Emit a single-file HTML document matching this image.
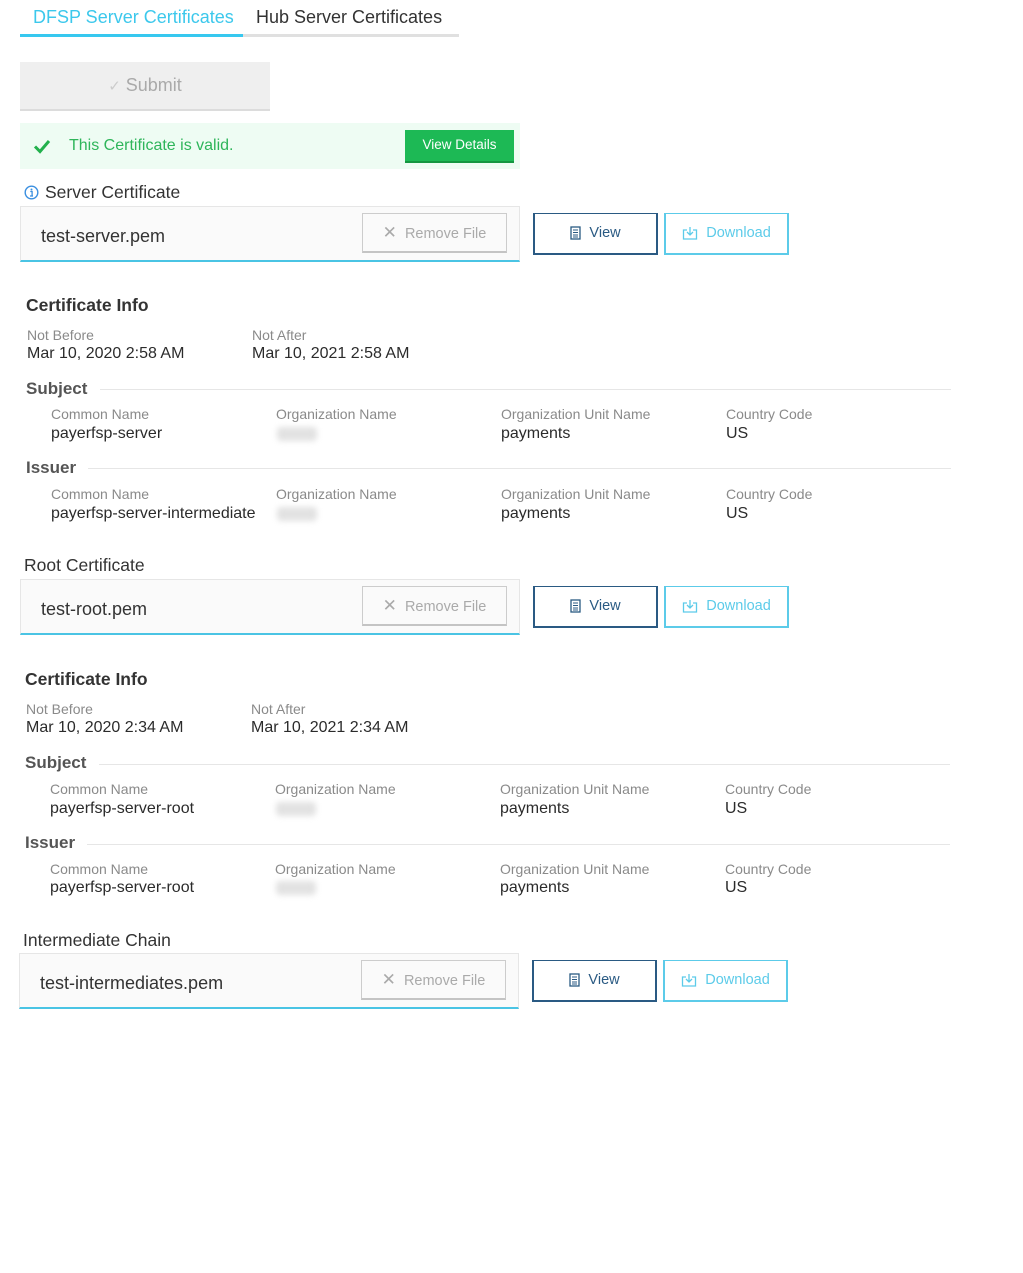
<!DOCTYPE html>
<html><head><meta charset="utf-8"><style>
*{margin:0;padding:0;box-sizing:border-box}
body{width:1023px;height:1024px;background:#fff;font-family:"Liberation Sans",sans-serif;position:relative;overflow:hidden;color:#333}
.a{position:absolute;white-space:nowrap}
.sec{position:absolute;left:0;width:1023px;height:320px}
.lbl{font-size:14px;color:#8a8a8a;line-height:16px}
.val{font-size:16px;color:#2b2b2b;line-height:18px}
.hd{font-size:17px;font-weight:bold;color:#555;line-height:20px}
.ln{position:absolute;height:1px;background:#e6e6e6}
.blur{position:absolute;width:40px;height:14px;background:#e2e2e2;filter:blur(3px);border-radius:4px}
.box{position:absolute;left:20px;top:0;width:500px;height:56px;background:#fafafa;border:1px solid #e6e6e6;border-bottom:2px solid #4ac4e4}
.rm{position:absolute;left:362px;top:7px;width:145px;height:40px;border:1px solid #ccc;border-bottom:2px solid #c4c4c4;color:#aaa;font-size:14.5px;line-height:37px;text-align:center}
.vw{position:absolute;left:533px;top:7px;width:125px;height:42px;border:2px solid #2a5a83;border-top-width:1px;color:#2a5a83;font-size:14.5px;line-height:39px;text-align:center}
.dl{position:absolute;left:664px;top:7px;width:125px;height:42px;border:2px solid #5ccbe9;border-top-width:1px;color:#5ccbe9;font-size:14.5px;line-height:39px;text-align:center}
svg{vertical-align:middle}
</style></head><body>

<div class="a" style="left:33px;top:6px;font-size:18px;color:#3cc8ec;line-height:22px">DFSP Server Certificates</div>
<div class="a" style="left:256px;top:6px;font-size:18px;color:#333;line-height:22px">Hub Server Certificates</div>
<div class="a" style="left:20px;top:34px;width:223px;height:3px;background:#37c8ef"></div>
<div class="a" style="left:243px;top:34px;width:216px;height:3px;background:#e0e0e0"></div>

<div class="a" style="left:20px;top:62px;width:250px;height:49px;background:#efefef;border-bottom:2px solid #dcdcdc;color:#aaa;font-size:18px;line-height:46px;text-align:center"><span style="color:#ccc;font-size:15px">✓</span> Submit</div>

<div class="a" style="left:20px;top:123px;width:500px;height:46px;background:#eefcf3"></div>
<svg class="a" style="left:33px;top:137px" width="18" height="18" viewBox="0 0 18 18"><path d="M2 9.5l5 5L16 4" stroke="#22b14c" stroke-width="3" fill="none"/></svg>
<div class="a" style="left:69px;top:136px;font-size:16px;color:#2eb55a;line-height:20px">This Certificate is valid.</div>
<div class="a" style="left:405px;top:130px;width:109px;height:33px;background:#1db955;border-bottom:2px solid #159640;color:#fff;font-size:13.5px;line-height:30px;text-align:center">View Details</div>

<div class="sec" style="top:206px">
 <svg class="a" style="left:24px;top:-21px" width="15" height="15" viewBox="0 0 15 15"><circle cx="7.5" cy="7.5" r="6.3" stroke="#3a8fe0" stroke-width="1.4" fill="none"/><circle cx="7.5" cy="4.5" r="1" fill="#3a8fe0"/><path d="M6.3 6.5h1.8v4.5M6 11h3" stroke="#3a8fe0" stroke-width="1.3" fill="none"/></svg>
 <div class="a" style="left:45px;top:-25px;font-size:17.5px;line-height:22px">Server Certificate</div>
 <div class="box"></div>
 <div class="a" style="left:41px;top:19px;font-size:18px;line-height:22px">test-server.pem</div>
 <div class="rm"><span style="font-size:17px">✕</span>&nbsp; Remove File</div>
 <div class="vw"><svg width="11" height="14" viewBox="0 0 11 14"><rect x="1" y="1" width="9" height="12" fill="none" stroke="#2a5a83" stroke-width="1.3"/><path d="M3 4h5M3 6.5h5M3 9h5M3 11h5" stroke="#2a5a83" stroke-width="1"/></svg>&nbsp; View</div>
 <div class="dl"><svg width="16" height="14" viewBox="0 0 16 14"><path d="M5 4H1.5v9h13V4H11M8 1v8M5 6l3 3 3-3" fill="none" stroke="#5ccbe9" stroke-width="1.3"/></svg>&nbsp; Download</div>
 <div class="a" style="left:26px;top:88px;font-size:17.5px;font-weight:bold;color:#333;line-height:22px">Certificate Info</div>
 <div class="a lbl" style="left:27px;top:121px">Not Before</div><div class="a val" style="left:27px;top:139px">Mar 10, 2020 2:58 AM</div>
 <div class="a lbl" style="left:252px;top:121px">Not After</div><div class="a val" style="left:252px;top:139px">Mar 10, 2021 2:58 AM</div>
 <div class="a hd" style="left:26px;top:173px">Subject</div><div class="ln" style="left:100px;width:851px;top:183px"></div>
 <div class="a lbl" style="left:51px;top:200px">Common Name</div><div class="a val" style="left:51px;top:219px">payerfsp-server</div>
 <div class="a lbl" style="left:276px;top:200px">Organization Name</div><div class="blur" style="left:277px;top:221px"></div>
 <div class="a lbl" style="left:501px;top:200px">Organization Unit Name</div><div class="a val" style="left:501px;top:219px">payments</div>
 <div class="a lbl" style="left:726px;top:200px">Country Code</div><div class="a val" style="left:726px;top:219px">US</div>
 <div class="a hd" style="left:26px;top:252px">Issuer</div><div class="ln" style="left:88px;width:863px;top:262px"></div>
 <div class="a lbl" style="left:51px;top:280px">Common Name</div><div class="a val" style="left:51px;top:299px">payerfsp-server-intermediate</div>
 <div class="a lbl" style="left:276px;top:280px">Organization Name</div><div class="blur" style="left:277px;top:301px"></div>
 <div class="a lbl" style="left:501px;top:280px">Organization Unit Name</div><div class="a val" style="left:501px;top:299px">payments</div>
 <div class="a lbl" style="left:726px;top:280px">Country Code</div><div class="a val" style="left:726px;top:299px">US</div>
</div>

<div class="sec" style="top:579px;left:-1px">
 <div class="a" style="left:25px;top:-25px;font-size:17.5px;line-height:22px">Root Certificate</div>
 <div class="box" style="left:21px"></div>
 <div class="a" style="left:42px;top:19px;font-size:18px;line-height:22px">test-root.pem</div>
 <div class="rm" style="left:363px"><span style="font-size:17px">✕</span>&nbsp; Remove File</div>
 <div class="vw" style="left:534px"><svg width="11" height="14" viewBox="0 0 11 14"><rect x="1" y="1" width="9" height="12" fill="none" stroke="#2a5a83" stroke-width="1.3"/><path d="M3 4h5M3 6.5h5M3 9h5M3 11h5" stroke="#2a5a83" stroke-width="1"/></svg>&nbsp; View</div>
 <div class="dl" style="left:665px"><svg width="16" height="14" viewBox="0 0 16 14"><path d="M5 4H1.5v9h13V4H11M8 1v8M5 6l3 3 3-3" fill="none" stroke="#5ccbe9" stroke-width="1.3"/></svg>&nbsp; Download</div>
 <div class="a" style="left:26px;top:89px;font-size:17.5px;font-weight:bold;color:#333;line-height:22px">Certificate Info</div>
 <div class="a lbl" style="left:27px;top:122px">Not Before</div><div class="a val" style="left:27px;top:140px">Mar 10, 2020 2:34 AM</div>
 <div class="a lbl" style="left:252px;top:122px">Not After</div><div class="a val" style="left:252px;top:140px">Mar 10, 2021 2:34 AM</div>
 <div class="a hd" style="left:26px;top:174px">Subject</div><div class="ln" style="left:100px;width:851px;top:185px"></div>
 <div class="a lbl" style="left:51px;top:202px">Common Name</div><div class="a val" style="left:51px;top:221px">payerfsp-server-root</div>
 <div class="a lbl" style="left:276px;top:202px">Organization Name</div><div class="blur" style="left:277px;top:223px"></div>
 <div class="a lbl" style="left:501px;top:202px">Organization Unit Name</div><div class="a val" style="left:501px;top:221px">payments</div>
 <div class="a lbl" style="left:726px;top:202px">Country Code</div><div class="a val" style="left:726px;top:221px">US</div>
 <div class="a hd" style="left:26px;top:254px">Issuer</div><div class="ln" style="left:88px;width:863px;top:265px"></div>
 <div class="a lbl" style="left:51px;top:282px">Common Name</div><div class="a val" style="left:51px;top:300px">payerfsp-server-root</div>
 <div class="a lbl" style="left:276px;top:282px">Organization Name</div><div class="blur" style="left:277px;top:302px"></div>
 <div class="a lbl" style="left:501px;top:282px">Organization Unit Name</div><div class="a val" style="left:501px;top:300px">payments</div>
 <div class="a lbl" style="left:726px;top:282px">Country Code</div><div class="a val" style="left:726px;top:300px">US</div>
</div>

<div class="sec" style="top:953px;left:-1px">
 <div class="a" style="left:24px;top:-24px;font-size:17.5px;line-height:22px">Intermediate Chain</div>
 <div class="box"></div>
 <div class="a" style="left:41px;top:19px;font-size:18px;line-height:22px">test-intermediates.pem</div>
 <div class="rm"><span style="font-size:17px">✕</span>&nbsp; Remove File</div>
 <div class="vw"><svg width="11" height="14" viewBox="0 0 11 14"><rect x="1" y="1" width="9" height="12" fill="none" stroke="#2a5a83" stroke-width="1.3"/><path d="M3 4h5M3 6.5h5M3 9h5M3 11h5" stroke="#2a5a83" stroke-width="1"/></svg>&nbsp; View</div>
 <div class="dl"><svg width="16" height="14" viewBox="0 0 16 14"><path d="M5 4H1.5v9h13V4H11M8 1v8M5 6l3 3 3-3" fill="none" stroke="#5ccbe9" stroke-width="1.3"/></svg>&nbsp; Download</div>
</div>

</body></html>
